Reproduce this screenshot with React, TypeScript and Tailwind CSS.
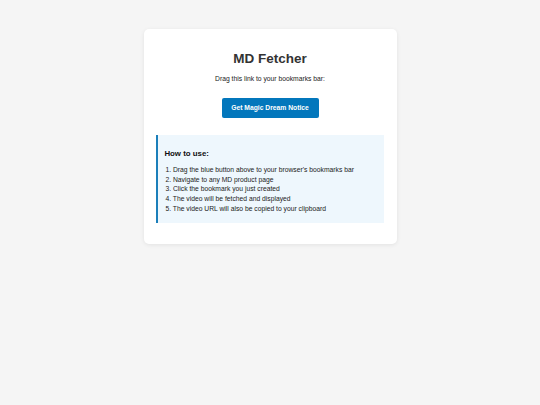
import React from "react";

export default function App() {
  const steps = [
    "Drag the blue button above to your browser's bookmarks bar",
    "Navigate to any MD product page",
    "Click the bookmark you just created",
    "The video will be fetched and displayed",
    "The video URL will also be copied to your clipboard",
  ];
  return (
    <div
      className="w-[540px] h-[405px] bg-[#f5f5f5] overflow-hidden pt-[29px]"
      style={{ fontFamily: '"Liberation Sans", Arial, sans-serif' }}
    >
      <div className="mx-auto w-[253px] bg-white rounded-[5px] shadow-[0_1px_4px_rgba(0,0,0,0.08)] px-[12.6px] pt-[22px] pb-[21px]">
        <h1 className="text-center font-bold text-[13.5px] leading-[16px] text-[#333]">
          MD Fetcher
        </h1>
        <p className="mt-[7.5px] text-center text-[6.75px] leading-[8px] text-[#222]">
          Drag this link to your bookmarks bar:
        </p>
        <div className="mt-[15.5px] flex justify-center">
          <a className="flex items-center justify-center w-[97px] h-[20px] rounded-[2px] bg-[#0377bc] text-white font-bold text-[6.75px] leading-[8px]">
            Get Magic Dream Notice
          </a>
        </div>
        <div className="mt-[17px] bg-[#eef7fd] border-l-[2px] border-[#1b7fba] pl-[6.3px] pr-[6.3px] pt-[14.4px] pb-[9.4px]">
          <h3 className="font-bold text-[7.86px] leading-[9px] text-[#111]">
            How to use:
          </h3>
          <ol className="mt-[6.7px] pl-[1px] text-[6.75px] leading-[9.7px] text-[#222]">
            {steps.map((s, i) => (
              <li key={i}>
                {i + 1}. {s}
              </li>
            ))}
          </ol>
        </div>
      </div>
    </div>
  );
}
